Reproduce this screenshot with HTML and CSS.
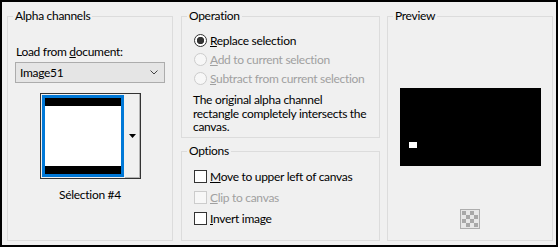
FILE: index.html
```html
<!DOCTYPE html>
<html>
<head>
<meta charset="utf-8">
<link rel="stylesheet" href="styles.css">
</head>
<body>
<div class="dialog">
  <fieldset class="group g-alpha">
    <legend>Alpha channels</legend>
    <div class="lbl">Load from <u>d</u>ocument:</div>
    <div class="combo">
      <span>Image51</span>
      <svg width="8" height="5" viewBox="0 0 8 5"><polyline points="0.5,0.5 4,4 7.5,0.5" fill="none" stroke="#444" stroke-width="1"/></svg>
    </div>
    <div class="thumb">
      <div class="thumb-pad"><div class="thumb-sel"><div class="thumb-img"></div></div></div>
      <div class="thumb-btn"><svg width="7" height="4" viewBox="0 0 7 4"><polygon points="0,0 7,0 3.5,4" fill="#000"/></svg></div>
    </div>
    <div class="caption">Sélection #4</div>
  </fieldset>

  <div class="mid">
    <fieldset class="group g-op">
      <legend>Operation</legend>
      <div class="list">
        <div class="row"><span class="radio on"></span><span><u>R</u>eplace selection</span></div>
        <div class="row dis"><span class="radio"></span><span><u>A</u>dd to current selection</span></div>
        <div class="row dis"><span class="radio"></span><span><u>S</u>ubtract from current selection</span></div>
      </div>
      <p class="desc">The original alpha channel<br>rectangle completely intersects the<br>canvas.</p>
    </fieldset>
    <fieldset class="group g-options">
      <legend>Options</legend>
      <div class="list">
        <div class="crow"><span class="check"></span><span><u>M</u>ove to upper left of canvas</span></div>
        <div class="crow dis"><span class="check"></span><span><u>C</u>lip to canvas</span></div>
        <div class="crow"><span class="check"></span><span><u>I</u>nvert image</span></div>
      </div>
    </fieldset>
  </div>

  <fieldset class="group g-preview">
    <legend>Preview</legend>
    <div class="canvas"><div class="dot"></div></div>
    <div class="transp">
      <svg width="20" height="20" viewBox="0 0 20 20">
        <rect x="0.5" y="0.5" width="19" height="19" fill="#e6e6e6" stroke="#adadad"/>
        <rect x="2" y="2" width="16" height="16" fill="#e8e8e8"/>
        <rect x="2" y="2" width="4" height="4" fill="#a8a8a8"/>
        <rect x="10" y="2" width="4" height="4" fill="#a8a8a8"/>
        <rect x="6" y="6" width="4" height="4" fill="#a8a8a8"/>
        <rect x="14" y="6" width="4" height="4" fill="#a8a8a8"/>
        <rect x="2" y="10" width="4" height="4" fill="#a8a8a8"/>
        <rect x="10" y="10" width="4" height="4" fill="#a8a8a8"/>
        <rect x="6" y="14" width="4" height="4" fill="#a8a8a8"/>
        <rect x="14" y="14" width="4" height="4" fill="#a8a8a8"/>
      </svg>
    </div>
  </fieldset>
</div>
</body>
</html>
```

FILE: styles.css
```css
* { box-sizing: border-box; }

body {
  margin: 0;
  font-family: Lato, "Noto Sans", sans-serif;
  font-size: 12px;
  letter-spacing: -0.3px;
  color: #000;
  white-space: nowrap;
}

.dialog {
  width: 558px;
  height: 247px;
  border: 2px solid #000;
  background: #f0f0f0;
  display: flex;
  padding: 7px 3px 4px 5px;
}

.group {
  margin: 0;
  padding: 0;
  border: 1px solid #dcdcdc;
  min-width: 0;
}

.group legend {
  padding: 0 2px;
  margin-left: 5px;
  line-height: 14px;
}

/* Alpha channels */
.g-alpha {
  width: 166px;
  display: flex;
  flex-direction: column;
}

.lbl {
  margin: 21px 0 0 8px;
  line-height: 15px;
}

.combo {
  margin: 3px 7px 0;
  height: 21px;
  border: 1px solid #acacac;
  background: #e5e5e5;
  display: flex;
  align-items: center;
  justify-content: space-between;
  padding: 0 6px 0 4px;
  line-height: 15px;
}

.combo svg { display: block; }

.thumb {
  margin: 10px auto 0;
  width: 101px;
  height: 86px;
  border: 1px solid #333;
  display: flex;
}

.thumb-pad {
  padding: 1px;
}

.thumb-sel {
  width: 82px;
  height: 82px;
  border: 3px solid #0078d7;
}

.thumb-img {
  height: 100%;
  background: #fff;
  border-top: 8px solid #000;
  border-bottom: 8px solid #000;
}

.thumb-btn {
  flex: 1;
  display: flex;
  align-items: center;
  justify-content: center;
  border-right: 1px solid #b4b4b4;
  border-bottom: 1px solid #b4b4b4;
}

.thumb-btn svg { display: block; margin-left: 1px; }

.caption {
  margin-top: 8px;
  text-align: center;
  line-height: 15px;
}

/* Middle column */
.mid {
  margin-left: 8px;
  width: 199px;
  display: flex;
  flex-direction: column;
}

.g-op { height: 129px; flex: none; }

.g-options {
  flex: 1;
  margin-top: 6px;
}

.list { margin-top: 8px; }

.row {
  display: flex;
  align-items: center;
  height: 19px;
  padding-left: 12px;
}

.crow {
  display: flex;
  align-items: center;
  height: 21px;
  padding-left: 12px;
}

.radio {
  flex: none;
  width: 13px;
  height: 13px;
  border-radius: 50%;
  border: 1px solid #333;
  background: #fff;
  margin-right: 3px;
}

.radio.on {
  background: radial-gradient(circle, #333 0 3.4px, #fff 4px);
}

.check {
  flex: none;
  width: 13px;
  height: 13px;
  border: 1px solid #333;
  background: #fff;
  margin-right: 3px;
}

.dis { color: #a0a0a0; }
.dis .radio, .dis .check { border-color: #cccccc; background: #f7f7f7; }

.desc {
  margin: 5px 0 0 11px;
  line-height: 13.5px;
}

/* Preview */
.g-preview {
  width: 166px;
  margin-left: 7px;
  display: flex;
  flex-direction: column;
  align-items: center;
}

.canvas {
  margin-top: 65px;
  width: 141px;
  height: 78px;
  background: #000;
  padding: 54px 0 0 9px;
}

.dot {
  width: 8px;
  height: 6px;
  background: #fff;
}

.transp {
  margin-top: 43px;
  width: 20px;
  height: 20px;
}

.transp svg { display: block; }
```
